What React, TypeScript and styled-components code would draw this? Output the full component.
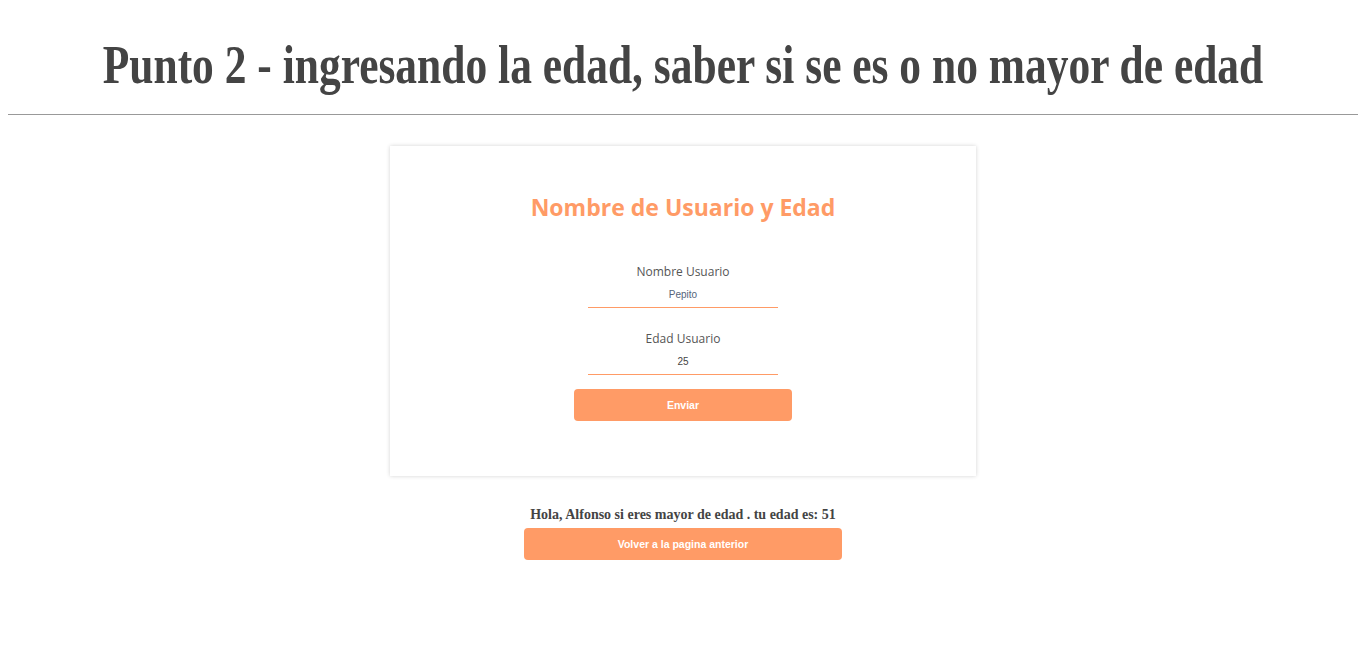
import React from 'react';
import styled, { createGlobalStyle } from 'styled-components';

const GlobalStyle = createGlobalStyle`
	body {
		margin: 8px;
		background: #fff;
		font-family: "Liberation Serif", serif;
		color: #444;
	}
`;

const Title = styled.h1`
	margin: 26px 0 18px;
	display: flex;
	justify-content: center;
	white-space: nowrap;
	font-family: "Liberation Serif", serif;
	font-weight: bold;
	font-size: 54px;
	line-height: 62px;
	color: #444;
	transform: scaleX(0.805);
`;

const Rule = styled.hr`
	margin: 0;
	border: none;
	border-top: 1px solid #999;
`;

const Page = styled.main`
	display: flex;
	flex-direction: column;
	align-items: center;
	padding-top: 31px;
`;

const Card = styled.form`
	width: 586px;
	height: 330px;
	box-sizing: border-box;
	background: #fff;
	box-shadow: 0 0 4px rgba(0, 0, 0, 0.18);
	display: flex;
	flex-direction: column;
	align-items: center;
	padding-top: 45px;
	font-family: "Open Sans", sans-serif;
`;

const CardTitle = styled.h2`
	margin: 0 0 40px;
	font-family: "Open Sans", sans-serif;
	font-weight: bold;
	font-size: 23px;
	color: #ff9b66;
`;

const Field = styled.label`
	display: flex;
	flex-direction: column;
	align-items: center;
	margin-bottom: 22px;
	font-size: 12px;
	color: #555;

	&:last-of-type {
		margin-bottom: 14px;
	}
`;

const Input = styled.input<{ $tone?: string }>`
	margin-top: 5px;
	width: 190px;
	border: none;
	border-bottom: 1px solid #ff9b66;
	outline: none;
	text-align: center;
	font-family: "Liberation Sans", Arial, sans-serif;
	font-size: 10px;
	padding: 4px 0 7px;
	color: ${(p) => p.$tone || '#444'};
	background: transparent;
`;

const Button = styled.button<{ $width: number }>`
	width: ${(p) => p.$width}px;
	height: 32px;
	border: none;
	border-radius: 4px;
	background: #ff9b66;
	color: #fff;
	font-family: "Liberation Sans", Arial, sans-serif;
	font-weight: bold;
	font-size: 10.5px;
	cursor: pointer;
`;

const Result = styled.p`
	margin: 31px 0 5px;
	font-family: "Liberation Serif", serif;
	font-weight: bold;
	font-size: 14px;
	color: #444;
`;

export default function App() {
	return (
		<>
			<GlobalStyle />
			<Title>
				<span>Punto 2 - ingresando la edad, saber si se es o no mayor de edad</span>
			</Title>
			<Rule />
			<Page>
				<Card onSubmit={(e) => e.preventDefault()}>
					<CardTitle>Nombre de Usuario y Edad</CardTitle>
					<Field>
						Nombre Usuario
						<Input defaultValue="Pepito" $tone="#56647a" />
					</Field>
					<Field>
						Edad Usuario
						<Input defaultValue="25" />
					</Field>
					<Button $width={218} type="submit">Enviar</Button>
				</Card>
				<Result>Hola, Alfonso si eres mayor de edad . tu edad es: 51</Result>
				<Button $width={318} type="button">Volver a la pagina anterior</Button>
			</Page>
		</>
	);
}
